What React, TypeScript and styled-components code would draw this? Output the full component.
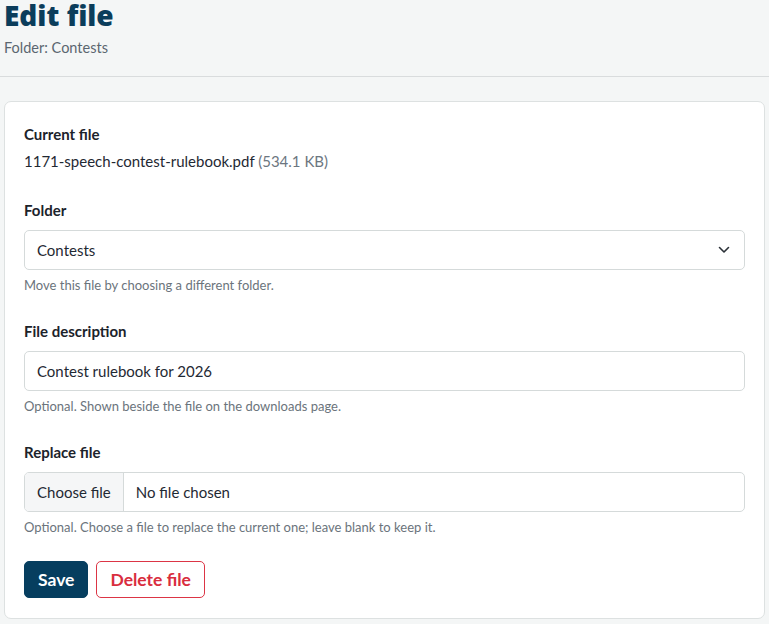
import React from "react";
import styled, { createGlobalStyle } from "styled-components";

const GlobalStyle = createGlobalStyle`
  html, body {
    margin: 0;
    padding: 0;
    background: #f4f6f6;
    font-family: Lato, "Liberation Sans", sans-serif;
    color: #1f2933;
  }
  * { box-sizing: border-box; }
`;

const Page = styled.div`
  width: 769px;
  height: 624px;
  overflow: hidden;
`;

const Header = styled.header`
  padding: 0 4px 19px;
  border-bottom: 1px solid #d9dcdd;
`;

const Title = styled.h1`
  margin: 0;
  font-family: "Open Sans", Lato, sans-serif;
  font-size: 28px;
  line-height: 30px;
  font-weight: 800;
  color: #0b3d5b;
`;

const Subtitle = styled.p`
  margin: 9px 0 0;
  font-size: 14.5px;
  line-height: 18px;
  color: #5b6670;
`;

const Card = styled.section`
  margin: 24px 4px 0;
  background: #fff;
  border: 1px solid #dde1e1;
  border-radius: 7px;
  padding: 22px 19px 20px;
`;

const Group = styled.div<{ gap?: number }>`
  margin-bottom: ${(p) => p.gap ?? 27}px;
`;

const Label = styled.div`
  font-size: 15px;
  line-height: 20px;
  font-weight: 700;
  color: #1c232b;
  margin-bottom: 10px;
`;

const FileName = styled.div`
  font-size: 15px;
  line-height: 20px;
  color: #1f2933;
  margin-top: -3px;
`;

const Size = styled.span`
  color: #6c7680;
`;

const Box = styled.div`
  height: 40px;
  border: 1px solid #d5dada;
  border-radius: 5px;
  background: #fff;
  display: flex;
  align-items: center;
  font-size: 15px;
  color: #1f2933;
  overflow: hidden;
`;

const BoxText = styled.span`
  flex: 1;
  padding: 0 12px;
`;

const Chevron = styled.svg`
  margin-right: 14px;
`;

const ChooseButton = styled.span`
  height: 100%;
  display: flex;
  align-items: center;
  padding: 0 12px;
  background: #f5f6f7;
  border-right: 1px solid #d5dada;
`;

const Help = styled.div`
  margin-top: 6px;
  font-size: 13px;
  line-height: 18px;
  color: #6b747c;
`;

const Actions = styled.div`
  display: flex;
  gap: 8px;
  margin-top: -2px;
`;

const Button = styled.button<{ danger?: boolean }>`
  height: 37px;
  padding: 0 13px;
  border-radius: 5px;
  font-family: inherit;
  font-size: 17.5px;
  font-weight: 700;
  cursor: pointer;
  border: 1px solid ${(p) => (p.danger ? "#dc3545" : "#063e5f")};
  background: ${(p) => (p.danger ? "#fff" : "#063e5f")};
  color: ${(p) => (p.danger ? "#d92d3e" : "#fff")};
`;

export default function App() {
  return (
    <Page>
      <GlobalStyle />
      <Header>
        <Title>Edit file</Title>
        <Subtitle>Folder: Contests</Subtitle>
      </Header>
      <Card>
        <Group gap={29}>
          <Label>Current file</Label>
          <FileName>
            1171-speech-contest-rulebook.pdf <Size>(534.1 KB)</Size>
          </FileName>
        </Group>
        <Group>
          <Label>Folder</Label>
          <Box>
            <BoxText>Contests</BoxText>
            <Chevron width="12" height="8" viewBox="0 0 12 8">
              <path d="M1.5 1.5 6 6l4.5-4.5" fill="none" stroke="#2b3138" strokeWidth="1.6" strokeLinecap="round" strokeLinejoin="round" />
            </Chevron>
          </Box>
          <Help>Move this file by choosing a different folder.</Help>
        </Group>
        <Group>
          <Label>File description</Label>
          <Box>
            <BoxText>Contest rulebook for 2026</BoxText>
          </Box>
          <Help>Optional. Shown beside the file on the downloads page.</Help>
        </Group>
        <Group>
          <Label>Replace file</Label>
          <Box>
            <ChooseButton>Choose file</ChooseButton>
            <BoxText>No file chosen</BoxText>
          </Box>
          <Help>Optional. Choose a file to replace the current one; leave blank to keep it.</Help>
        </Group>
        <Actions>
          <Button>Save</Button>
          <Button danger>Delete file</Button>
        </Actions>
      </Card>
    </Page>
  );
}
